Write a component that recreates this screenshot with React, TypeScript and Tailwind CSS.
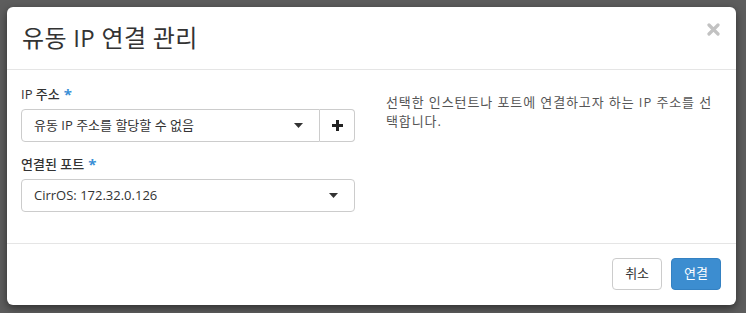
function Caret() {
  return (
    <svg width="9" height="5" viewBox="0 0 9 5" className="text-[#333]">
      <path d="M0 0 L9 0 L4.5 5 Z" fill="currentColor" />
    </svg>
  );
}

function Label({ text }: { text: string }) {
  return (
    <label className="flex items-center gap-1 text-[13px] font-medium text-[#333] mb-[6px] leading-[18px]">
      {text}
      <span className="text-[#3a8fd6] text-[15px] leading-none font-bold">*</span>
    </label>
  );
}

export default function App() {
  return (
    <div
      className="w-[746px] h-[313px] bg-[#5d5d5d] pt-[7px] pl-[7px] overflow-hidden"
      style={{ fontFamily: '"Open Sans", "Noto Sans CJK KR", sans-serif' }}
    >
      <div className="w-[729px] h-[298px] bg-white rounded-[6px] shadow-[0_3px_9px_rgba(0,0,0,0.5)] flex flex-col">
        {/* header */}
        <div className="h-[63px] border-b border-[#e5e5e5] flex items-center justify-between pl-[15px] pr-[16px]">
          <h4 className="text-[24px] text-[#333] leading-none tracking-[0.3px]">유동 IP 연결 관리</h4>
          <svg width="13" height="13" viewBox="0 0 13 13" className="-mt-[18px]">
            <path d="M2 2 L11 11 M11 2 L2 11" stroke="#c2c2c2" strokeWidth="3.2" strokeLinecap="round" />
          </svg>
        </div>

        {/* body */}
        <div className="h-[173px] pt-[15px] pl-[14px] pr-[10px] flex gap-[31px]">
          <div className="w-[334px] shrink-0 flex flex-col">
            <Label text="IP 주소" />
            <div className="flex h-[33px]">
              <div className="flex-1 border border-[#ccc] rounded-l-[4px] flex items-center justify-between pl-[12px] pr-[16px] text-[13px] text-[#333]">
                <span>유동 IP 주소를 할당할 수 없음</span>
                <Caret />
              </div>
              <div className="w-[35px] border border-l-0 border-[#ccc] rounded-r-[4px] flex items-center justify-center">
                <svg width="11" height="11" viewBox="0 0 11 11">
                  <path d="M4 0 H7 V4 H11 V7 H7 V11 H4 V7 H0 V4 H4 Z" fill="#222" />
                </svg>
              </div>
            </div>

            <div className="mt-[13px]">
              <Label text="연결된 포트" />
            </div>
            <div className="h-[33px] border border-[#ccc] rounded-[4px] flex items-center justify-between pl-[12px] pr-[16px] text-[13px] text-[#333]">
              <span>CirrOS: 172.32.0.126</span>
              <Caret />
            </div>
          </div>

          <div className="pt-[8px] w-[334px] shrink-0 text-[13px] text-[#555] leading-[19px] tracking-[0.9px] break-all">
            선택한 인스턴트나 포트에 연결하고자 하는 IP 주소를 선택합니다.
          </div>
        </div>

        {/* footer */}
        <div className="flex-1 border-t border-[#e5e5e5] flex items-center justify-end gap-[9px] pr-[15px] pb-[1px]">
          <button className="h-[32px] px-[12px] border border-[#ccc] rounded-[4px] bg-white text-[13px] text-[#333]">
            취소
          </button>
          <button className="h-[32px] px-[12px] border border-[#3481c2] rounded-[4px] bg-[#3c8dd0] text-[13px] text-white">
            연결
          </button>
        </div>
      </div>
    </div>
  );
}
